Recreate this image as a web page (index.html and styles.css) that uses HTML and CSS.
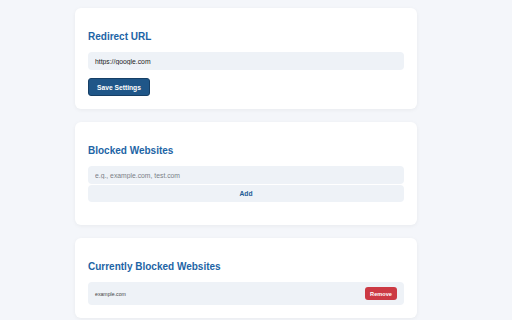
FILE: index.html
```html
<!doctype html>
<html lang="en">
  <head>
    <meta charset="UTF-8" />
    <meta name="viewport" content="width=device-width, initial-scale=1.0" />
    <title>Settings</title>
    <link rel="stylesheet" href="styles.css">
  </head>
  <body>
    <div class="container">
      <div class="card">
        <h2>Redirect URL</h2>
        <input type="text" id="redirect-url" value="https://google.com" />
        <button class="save-btn" id="save-btn">Save Settings</button>
      </div>

      <div class="card">
        <h2>Blocked Websites</h2>
        <div class="add-form">
          <input type="text" id="site-input" placeholder="e.g., example.com, test.com" />
          <button class="add-btn" id="add-btn">Add</button>
        </div>
      </div>

      <div class="card">
        <h2>Currently Blocked Websites</h2>
        <ul class="site-list" id="site-list">
          <li class="site-item">
            <span>example.com</span>
            <button class="remove-btn">Remove</button>
          </li>
        </ul>
      </div>
    </div>
  </body>
</html>
```

FILE: styles.css
```css
body {
  font-family: "Liberation Sans", Arial, sans-serif;
  margin: 0;
  padding: 8px 0;
  background-color: #f4f6fa;
}
.container {
  width: 342px;
  margin-left: 75px;
}
.card {
  background: #fff;
  border-radius: 6px;
  padding: 13px;
  margin-bottom: 13px;
  box-shadow: 0 1px 4px rgba(0, 0, 0, 0.05);
}
h2 {
  margin: 10px 0 9px;
  font-size: 10px;
  line-height: 12px;
  color: #1d64a5;
}
input {
  display: block;
  width: 100%;
  height: 18px;
  padding: 0 7px;
  box-sizing: border-box;
  border: none;
  border-radius: 4px;
  background: #eef2f7;
  font-family: inherit;
  font-size: 6.8px;
  color: #222;
}
input::placeholder {
  color: #7a7f87;
}
button {
  font-family: inherit;
  font-weight: bold;
  cursor: pointer;
  border-radius: 3px;
}
.save-btn {
  display: block;
  margin-top: 8px;
  width: 62px;
  height: 18px;
  padding: 0;
  background: #1f5688;
  border: 1px solid #163f66;
  color: #fff;
  font-size: 6.7px;
}
.add-form {
  margin-bottom: 10px;
}
.add-btn {
  display: block;
  width: 100%;
  height: 17px;
  margin-top: 1px;
  padding: 0;
  border: none;
  border-radius: 4px;
  background: #eef2f7;
  color: #1d5a94;
  font-size: 6.7px;
}
.site-list {
  list-style: none;
  margin: 0;
  padding: 0;
}
.site-item {
  display: flex;
  align-items: center;
  justify-content: space-between;
  height: 23px;
  padding: 0 7px;
  border-radius: 4px;
  background: #eef2f7;
  font-size: 5.2px;
  color: #444;
}
.remove-btn {
  width: 32px;
  height: 13px;
  padding: 0;
  border: none;
  background: #cc3a44;
  color: #fff;
  font-size: 5.6px;
}
```
